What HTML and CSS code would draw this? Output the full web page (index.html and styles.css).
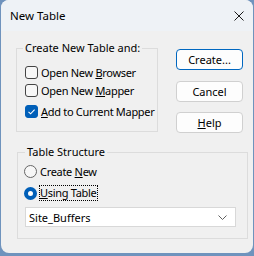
FILE: index.html
```html
<!DOCTYPE html>
<html lang="en">
<head>
  <meta charset="UTF-8">
  <title>New Table</title>
  <link rel="stylesheet" href="styles.css">
</head>
<body>

<div class="window">
  <div class="titlebar">
    <span class="title">New Table</span>
    <svg class="close" width="10" height="10" viewBox="0 0 10 10">
      <path d="M0.5 0.5 L9.5 9.5 M9.5 0.5 L0.5 9.5" stroke="#1a1a1a" stroke-width="1" fill="none"/>
    </svg>
  </div>

  <div class="content">
    <div class="top-row">
      <fieldset class="group group-create">
        <legend>Create New Table and:</legend>
        <label class="option row1">
          <span class="check"></span>
          <span>Open New <u>B</u>rowser</span>
        </label>
        <label class="option row2">
          <span class="check"></span>
          <span>Open New <u>M</u>apper</span>
        </label>
        <label class="option row3">
          <span class="check checked">
            <svg width="13" height="13" viewBox="0 0 13 13">
              <path d="M3.5 6.8 L5.6 8.8 L9.6 4.6" stroke="#fff" stroke-width="1.1" fill="none"/>
            </svg>
          </span>
          <span><u>A</u>dd to Current Mapper</span>
        </label>
      </fieldset>

      <div class="buttons">
        <button class="btn default">Create...</button>
        <button class="btn">Cancel</button>
        <button class="btn"><u>H</u>elp</button>
      </div>
    </div>

    <fieldset class="group group-structure">
      <legend>Table Structure</legend>
      <label class="option radio-row">
        <span class="radio"></span>
        <span>Create <u>N</u>ew</span>
      </label>
      <label class="option radio-row using">
        <span class="radio on"></span>
        <span class="focus"><u>U</u>sing Table</span>
      </label>
      <div class="select">
        <span>Site_Buffers</span>
        <svg width="9" height="5" viewBox="0 0 9 5">
          <path d="M0.5 0.5 L4.5 4.5 L8.5 0.5" stroke="#606060" stroke-width="1" fill="none"/>
        </svg>
      </div>
    </fieldset>
  </div>
</div>

</body>
</html>
```

FILE: styles.css
```css
body {
  margin: 0;
  background-color: #6f93bd;
  font-family: 'Noto Sans', sans-serif;
  font-size: 11px;
  color: #000;
}
.window {
  width: 252px;
  height: 253px;
  margin-left: 1px;
  border-radius: 8px;
  background-color: #f0f0f0;
  overflow: hidden;
  display: flex;
  flex-direction: column;
}
.titlebar {
  height: 31px;
  background-color: #eef2f6;
  display: flex;
  align-items: center;
  justify-content: space-between;
  padding: 0 9px 0 9px;
  box-sizing: border-box;
}
.title {
  font-size: 11.5px;
  line-height: 16px;
}
.close {
  display: block;
}
.content {
  padding: 9px 0 0 15px;
}
.top-row {
  display: flex;
  align-items: flex-start;
}
.group {
  border: 1px solid #dcdcdc;
  margin: 0;
  padding: 0 8px;
  min-width: 0;
}
.group legend {
  padding: 0 2px;
  margin-left: -2px;
  line-height: 16px;
  white-space: nowrap;
}
.group-create {
  width: 142px;
  height: 92px;
  flex-shrink: 0;
  box-sizing: border-box;
  padding-top: 7px;
}
.option {
  display: flex;
  align-items: center;
  gap: 3px;
  height: 18px;
  white-space: nowrap;
  letter-spacing: -0.3px;
}
.row3 {
  margin-top: 3px;
}
.check {
  width: 13px;
  height: 13px;
  box-sizing: border-box;
  border: 1px solid #444;
  border-radius: 3px;
  background-color: #f7f7f7;
  flex-shrink: 0;
}
.check.checked {
  border-color: #005fb8;
  background-color: #005fb8;
}
.check svg {
  display: block;
  margin: -1px;
}
.buttons {
  display: flex;
  flex-direction: column;
  margin-left: 18px;
  margin-top: 9px;
}
.btn {
  width: 67px;
  height: 21px;
  padding: 0;
  margin-bottom: 10px;
  border: 1px solid #d0d0d0;
  border-radius: 4px;
  background-color: #fdfdfd;
  font-family: inherit;
  font-size: 11px;
  color: #000;
}
.btn.default {
  border: 1.5px solid #0067c0;
  margin-bottom: 11px;
}
.btn:last-child {
  margin-bottom: 0;
}
.group-structure {
  width: 231px;
  height: 95px;
  box-sizing: border-box;
  margin: 11px 0 0 1px;
  padding-top: 1px;
  padding-left: 6px;
}
.group-structure legend {
  margin-left: 1px;
}
.radio-row {
  height: 20px;
}
.radio-row.using {
  margin-top: 2px;
}
.radio {
  width: 13px;
  height: 13px;
  box-sizing: border-box;
  border: 1px solid #666;
  border-radius: 50%;
  background-color: #f7f7f7;
  flex-shrink: 0;
}
.radio.on {
  border: 4px solid #005fb8;
  background-color: #fff;
}
.focus {
  outline: 1px dotted #000;
  line-height: 14px;
}
.select {
  margin-top: 4px;
  margin-left: 1px;
  width: 211px;
  height: 20px;
  box-sizing: border-box;
  border: 1px solid #d8d8d8;
  background-color: #fff;
  display: flex;
  align-items: center;
  justify-content: space-between;
  padding: 0 8px 0 3px;
}
.select svg {
  display: block;
}
```
